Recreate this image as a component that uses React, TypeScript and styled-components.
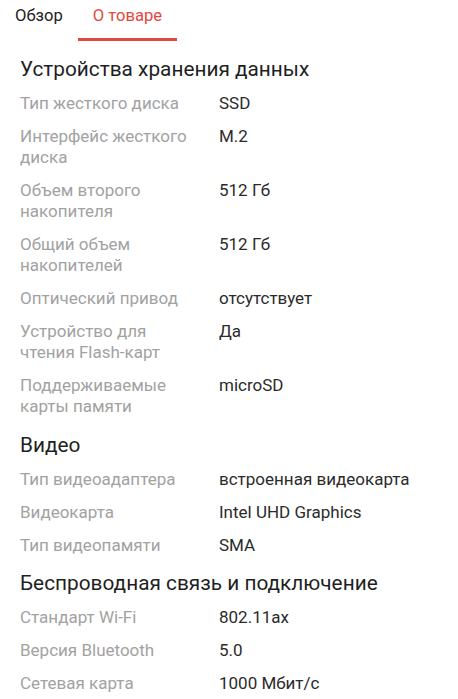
import React from "react";
import styled, { createGlobalStyle } from "styled-components";

const Global = createGlobalStyle`
  html, body { margin: 0; padding: 0; background: #ffffff; }
  body { font-family: Roboto, "Noto Sans", Arial, sans-serif; -webkit-font-smoothing: antialiased; }
  * { box-sizing: border-box; }
`;

const Page = styled.div`
  width: 458px;
  background: #fff;
`;

const Tabs = styled.nav`
  display: flex;
  height: 41px;
`;

const Tab = styled.div<{ $active?: boolean }>`
  position: relative;
  padding: 5px 15px 0;
  height: 41px;
  font-size: 16.6px;
  line-height: 21px;
  color: ${(p) => (p.$active ? "#e2493d" : "#222")};
  &::after {
    content: "";
    position: absolute;
    left: 0;
    right: 0;
    bottom: 0;
    height: 3px;
    background: ${(p) => (p.$active ? "#e2493d" : "transparent")};
  }
`;

const Content = styled.div`
  padding: 6px 20px 0;
`;

const SectionTitle = styled.h2`
  margin: 0;
  padding: 9.5px 0 5px;
  font-size: 20.8px;
  line-height: 25px;
  font-weight: 400;
  color: #1f1f1f;
`;

const Row = styled.div`
  display: grid;
  grid-template-columns: 178px 1fr;
  column-gap: 21px;
  padding: 6px 0;
  font-size: 17px;
  line-height: 21.05px;
`;

const Label = styled.div`
  color: #a2a2a2;
`;

const Value = styled.div`
  color: #2b2b2b;
`;

type Section = { title: string; rows: [string, string][] };

const sections: Section[] = [
  {
    title: "Устройства хранения данных",
    rows: [
      ["Тип жесткого диска", "SSD"],
      ["Интерфейс жесткого диска", "M.2"],
      ["Объем второго накопителя", "512 Гб"],
      ["Общий объем накопителей", "512 Гб"],
      ["Оптический привод", "отсутствует"],
      ["Устройство для чтения Flash-карт", "Да"],
      ["Поддерживаемые карты памяти", "microSD"],
    ],
  },
  {
    title: "Видео",
    rows: [
      ["Тип видеоадаптера", "встроенная видеокарта"],
      ["Видеокарта", "Intel UHD Graphics"],
      ["Тип видеопамяти", "SMA"],
    ],
  },
  {
    title: "Беспроводная связь и подключение",
    rows: [
      ["Стандарт Wi-Fi", "802.11ax"],
      ["Версия Bluetooth", "5.0"],
      ["Сетевая карта", "1000 Мбит/с"],
    ],
  },
];

export default function App() {
  return (
    <Page>
      <Global />
      <Tabs>
        <Tab>Обзор</Tab>
        <Tab $active>О товаре</Tab>
      </Tabs>
      <Content>
        {sections.map((s) => (
          <section key={s.title}>
            <SectionTitle>{s.title}</SectionTitle>
            {s.rows.map(([l, v]) => (
              <Row key={l}>
                <Label>{l}</Label>
                <Value>{v}</Value>
              </Row>
            ))}
          </section>
        ))}
      </Content>
    </Page>
  );
}
